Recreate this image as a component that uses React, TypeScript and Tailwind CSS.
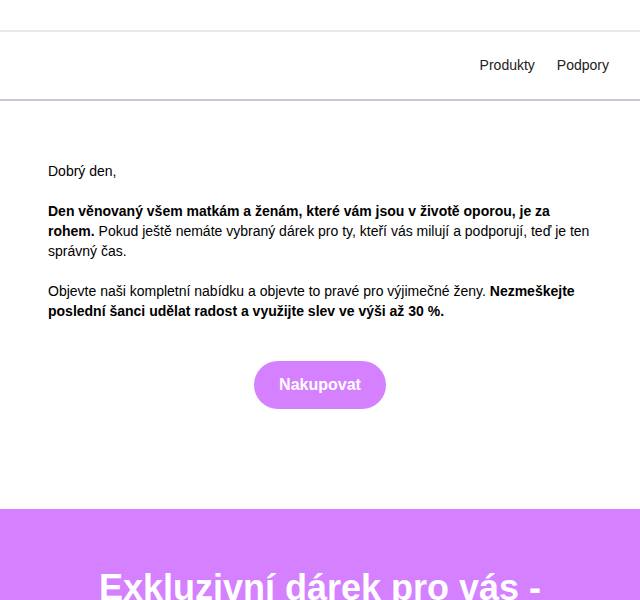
import React from "react";

export default function App() {
  return (
    <div className="w-full bg-white font-['Liberation_Sans',Arial,sans-serif] text-[#000]">
      <div className="h-[30px] bg-white" />
      <div className="h-[2px] bg-[#e8e8e8]" />
      <header className="flex h-[67px] items-center justify-end gap-[22px] pr-[31px] text-[14px] text-[#222]">
        <a href="#">Produkty</a>
        <a href="#">Podpory</a>
      </header>
      <div className="h-[2px] bg-[#cbc3dc]" />
      <main className="px-[48px] pt-[60px] pb-[100px] text-[14px] leading-[20px]">
        <p>Dobrý den,</p>
        <p className="mt-[20px]">
          <b>Den věnovaný všem matkám a ženám, které vám jsou v životě oporou, je za rohem.</b>{" "}
          Pokud ještě nemáte vybraný dárek pro ty, kteří vás milují a podporují, teď je ten správný čas.
        </p>
        <p className="mt-[20px]">
          Objevte naši kompletní nabídku a objevte to pravé pro výjimečné ženy.{" "}
          <b>Nezmeškejte poslední šanci udělat radost a využijte slev ve výši až 30 %.</b>
        </p>
        <div className="mt-[40px] flex justify-center">
          <a href="#" className="flex h-[48px] w-[132px] items-center justify-center rounded-full bg-[#d580ff] text-[16px] font-bold text-white">
            Nakupovat
          </a>
        </div>
      </main>
      <section className="bg-[#d580ff] px-[48px] pt-[57px] pb-[40px] text-center">
        <h1 className="text-[36px] font-bold leading-[43px] text-white">
          Exkluzivní dárek pro vás - pouze pro naše zákaznice
        </h1>
      </section>
    </div>
  );
}
